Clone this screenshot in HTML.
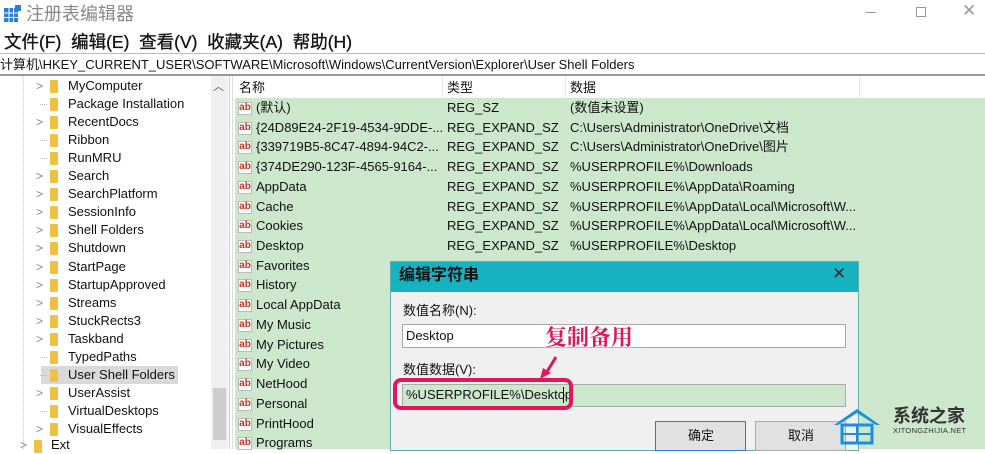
<!DOCTYPE html>
<html><head><meta charset="utf-8"><style>
*{margin:0;padding:0;box-sizing:border-box}
body{width:985px;height:449px;overflow:hidden;background:#fff;position:relative;font-family:"Liberation Sans","Noto Sans CJK SC",sans-serif;color:#111}
.a{position:absolute;white-space:nowrap}
.t{font-size:13px;line-height:18px;height:18px}
.fold{position:absolute;width:8px;height:13px;background:#f0c040;border-radius:1px}
.chev{position:absolute;font-size:12px;color:#888;line-height:18px}
.ab{position:absolute;width:14px;height:13px;background:#fff;border:1px solid #bbb;color:#d03020;font-size:10px;font-weight:bold;line-height:10px;text-align:center}
</style></head><body>
<svg class="a" style="left:4px;top:5px" width="18" height="18"><rect x="0" y="3" width="14" height="14" fill="#2a7fd0"/><g stroke="#fff" stroke-width="1"><line x1="0" y1="8" x2="14" y2="8"/><line x1="0" y1="12.5" x2="14" y2="12.5"/><line x1="5" y1="3" x2="5" y2="17"/><line x1="9.5" y1="3" x2="9.5" y2="17"/></g><rect x="11" y="0" width="6" height="6" fill="#2a7fd0"/></svg>
<div class="a" style="left:26px;top:2px;font-size:18px;line-height:24px;color:#888">注册表编辑器</div>
<div class="a" style="left:866px;top:12px;width:10px;height:1px;background:#999"></div>
<div class="a" style="left:916px;top:7px;width:10px;height:10px;border:1px solid #999"></div>
<div class="a" style="left:962px;top:1px;font-size:17px;color:#999">✕</div>
<div class="a" style="left:4px;top:30px;font-size:17.5px;line-height:24px;-webkit-text-stroke:0.3px #111">文件(F)&nbsp;&nbsp;编辑(E)&nbsp;&nbsp;查看(V)&nbsp;&nbsp;收藏夹(A)&nbsp;&nbsp;帮助(H)</div>
<div class="a" style="left:0;top:53px;width:985px;height:1px;background:#bbb"></div>
<div class="a" style="left:0;top:56px;font-size:13px;line-height:18px">计算机\HKEY_CURRENT_USER\SOFTWARE\Microsoft\Windows\CurrentVersion\Explorer\User Shell Folders</div>
<div class="a" style="left:0;top:74px;width:985px;height:2px;background:#999"></div>
<div class="a" style="left:229px;top:76px;width:1px;height:373px;background:#ccc"></div>
<div class="a" style="left:232px;top:76px;width:1px;height:373px;background:#ddd"></div>
<div class="a" style="left:211px;top:76px;width:17px;height:373px;background:#f0f0f0"></div>
<div class="a" style="left:213px;top:388px;width:13px;height:52px;background:#cdcdcd"></div>
<div class="a" style="left:213px;top:78px;font-size:11px;color:#555">︿</div>
<div class="a" style="left:23px;top:76px;width:1px;height:373px;border-left:1px dotted #ccc"></div>
<div class="a" style="left:41px;top:366px;width:137px;height:18px;background:#d9d9d9"></div>
<div id="tree"></div>
<div class="a" style="left:235px;top:98px;width:750px;height:351px;background:#cde7cd"></div>
<div class="a" style="left:442px;top:77px;width:1px;height:20px;background:#e5e5e5"></div>
<div class="a" style="left:565px;top:77px;width:1px;height:20px;background:#e5e5e5"></div>
<div class="a" style="left:859px;top:77px;width:1px;height:20px;background:#e5e5e5"></div>
<div class="a t" style="left:239px;top:79px">名称</div>
<div class="a t" style="left:447px;top:79px">类型</div>
<div class="a t" style="left:570px;top:79px">数据</div>
<div id="list"></div>
<div class="a" style="left:390px;top:261px;width:469px;height:190px;background:#f0f0f0;border:1px solid #6aa"></div>
<div class="a" style="left:391px;top:262px;width:467px;height:30px;background:#17b2c0"></div>
<div class="a" style="left:399px;top:264px;font-size:16px;line-height:24px;font-weight:bold;color:#111">编辑字符串</div>
<div class="a" style="left:832px;top:264px;font-size:17px;color:#333">✕</div>
<div class="a t" style="left:403px;top:302px">数值名称(N):</div>
<div class="a" style="left:402px;top:324px;width:444px;height:24px;background:#fff;border:1px solid #aaa"></div>
<div class="a t" style="left:406px;top:327px">Desktop</div>
<div class="a t" style="left:403px;top:361px">数值数据(V):</div>
<div class="a" style="left:402px;top:384px;width:444px;height:23px;background:#cde7cd;border:1px solid #aaa"></div>
<div class="a t" style="left:406px;top:386px">%USERPROFILE%\Desktop</div>
<div class="a" style="left:563px;top:387px;width:1px;height:16px;background:#000"></div>
<div class="a" style="left:393px;top:378px;width:180px;height:32px;border:4px solid #e0185a;border-radius:8px"></div>
<div class="a" style="left:545px;top:322px;font-size:22px;line-height:30px;color:#e0185a;font-family:'Noto Serif CJK SC',serif;font-weight:bold;text-shadow:1px 1px 2px #fff">复制备用</div>
<svg class="a" style="left:540px;top:355px" width="20" height="25"><line x1="16" y1="2" x2="5" y2="20" stroke="#e0185a" stroke-width="3"/><polygon points="0,24 3,13 11,18" fill="#e0185a"/></svg>
<div class="a" style="left:655px;top:421px;width:91px;height:30px;border:1px solid #2a7fd0;background:#e1e1e1"></div>
<div class="a t" style="left:688px;top:427px">确定</div>
<div class="a" style="left:755px;top:421px;width:91px;height:30px;border:1px solid #aaa;background:#e1e1e1"></div>
<div class="a t" style="left:788px;top:427px">取消</div>
<svg class="a" style="left:832px;top:405px" width="50" height="40"><polygon points="2,20 25,4 48,20 44,20 25,8 6,20" fill="#1a8fe0"/><rect x="10" y="20" width="30" height="18" fill="none" stroke="#1a8fe0" stroke-width="3"/><line x1="10" y1="29" x2="40" y2="29" stroke="#1a8fe0" stroke-width="2"/><line x1="25" y1="20" x2="25" y2="38" stroke="#1a8fe0" stroke-width="2"/></svg>
<div class="a" style="left:893px;top:404px;font-size:18px;line-height:24px;font-weight:bold;color:#333">系统之家</div>
<div class="a" style="left:893px;top:426px;font-size:7.5px;color:#333;letter-spacing:.3px">XITONGZHIJIA.NET</div>
<script>
var tr=[["MyComputer",1],["Package Installation",0],["RecentDocs",1],["Ribbon",0],["RunMRU",0],["Search",1],["SearchPlatform",1],["SessionInfo",1],["Shell Folders",1],["Shutdown",1],["StartPage",1],["StartupApproved",1],["Streams",1],["StuckRects3",1],["Taskband",1],["TypedPaths",0],["User Shell Folders",0],["UserAssist",1],["VirtualDesktops",0],["VisualEffects",1]];
var h="";tr.forEach(function(r,i){var y=77+i*18.05;h+=(r[1]?'<div class="chev" style="left:36px;top:'+y+'px">&gt;</div>':'<div class="a" style="left:40px;top:'+(y+9)+'px;width:7px;border-top:1px dotted #bbb"></div>')+'<div class="fold" style="left:50px;top:'+(y+3)+'px"></div><div class="a t" style="left:68px;top:'+y+'px">'+r[0]+'</div>';});
h+='<div class="chev" style="left:20px;top:436px">&gt;</div><div class="fold" style="left:34px;top:440px"></div><div class="a t" style="left:51px;top:436px">Ext</div>';
document.getElementById("tree").innerHTML=h;
var E="REG_EXPAND_SZ",P="%USERPROFILE%\\",L=P+"AppData\\Local\\Microsoft\\W...";
var ls=[["(默认)","REG_SZ","(数值未设置)"],["{24D89E24-2F19-4534-9DDE-...",E,"C:\\Users\\Administrator\\OneDrive\\文档"],["{339719B5-8C47-4894-94C2-...",E,"C:\\Users\\Administrator\\OneDrive\\图片"],["{374DE290-123F-4565-9164-...",E,P+"Downloads"],["AppData",E,P+"AppData\\Roaming"],["Cache",E,L],["Cookies",E,L],["Desktop",E,P+"Desktop"],["Favorites"],["History"],["Local AppData"],["My Music"],["My Pictures"],["My Video"],["NetHood"],["Personal"],["PrintHood"],["Programs"]];
h="";ls.forEach(function(r,i){var y=99+i*19.72;h+='<div class="ab" style="left:238px;top:'+(y+3)+'px">ab</div><div class="a t" style="left:256px;top:'+y+'px;width:188px;overflow:hidden">'+r[0]+'</div>';if(r[1])h+='<div class="a t" style="left:447px;top:'+y+'px">'+r[1]+'</div><div class="a t" style="left:570px;top:'+y+'px">'+r[2]+'</div>';});
document.getElementById("list").innerHTML=h;
</script>
</body></html>
